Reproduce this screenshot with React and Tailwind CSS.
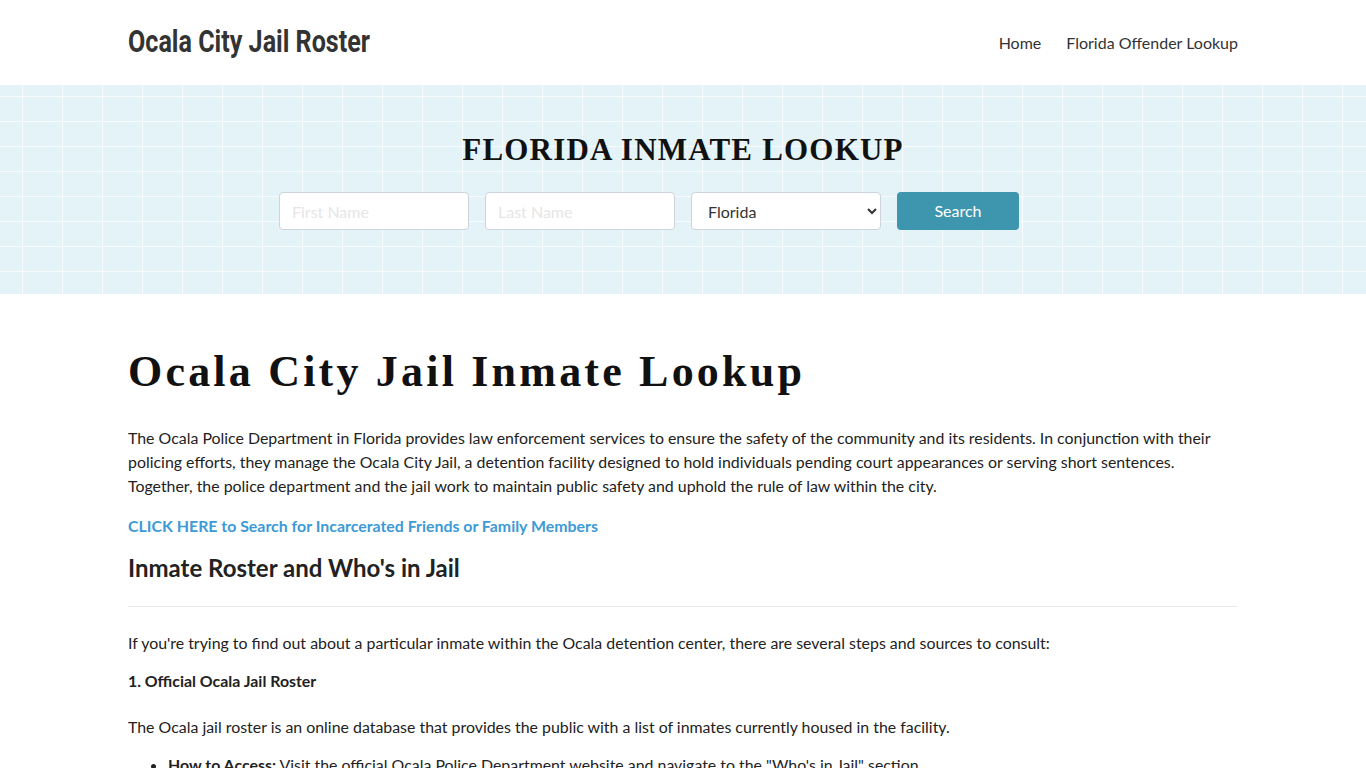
import { useState } from 'react'

const STATES = ['Alabama', 'Alaska', 'Arizona', 'Florida', 'Georgia', 'Texas']

export default function App() {
  const [state, setState] = useState('Florida')

  return (
    <div className="min-h-screen bg-white text-[#222] font-['Lato','Open_Sans',sans-serif]">
      {/* Header */}
      <header className="h-[85px] bg-white">
        <div className="mx-auto w-[1110px] h-full flex items-center justify-between">
          <a href="#" className="inline-block origin-left scale-x-[0.81] whitespace-nowrap text-[#333] text-[31px] font-bold font-['Roboto','Liberation_Sans',sans-serif]">
            Ocala City Jail Roster
          </a>
          <nav className="flex items-center gap-[25px] text-[16px] text-[#333]">
            <a href="#">Home</a>
            <a href="#">Florida Offender Lookup</a>
          </nav>
        </div>
      </header>

      {/* Search banner */}
      <section className="h-[209px] bg-[#e3f3f7] bg-[linear-gradient(90deg,rgba(255,255,255,0.7)_1.5px,transparent_1.5px),linear-gradient(0deg,rgba(255,255,255,0.7)_1.5px,transparent_1.5px)] bg-[length:40px_25px] bg-[position:22px_12px] flex flex-col items-center pt-[47px]">
        <h2 className="text-[31px] leading-[36px] font-bold tracking-[1.2px] text-[#111] font-['Liberation_Serif','DejaVu_Serif',serif]">
          FLORIDA INMATE LOOKUP
        </h2>
        <form className="mt-[24px] mr-[68px] flex gap-4" onSubmit={e => e.preventDefault()}>
          <input
            placeholder="First Name"
            className="w-[190px] h-[38px] px-3 rounded border border-[#ced4da] bg-white text-[16px] placeholder:text-[#e6e6e6] outline-none"
          />
          <input
            placeholder="Last Name"
            className="w-[190px] h-[38px] px-3 rounded border border-[#ced4da] bg-white text-[16px] placeholder:text-[#e6e6e6] outline-none"
          />
          <select
            value={state}
            onChange={e => setState(e.target.value)}
            className="w-[190px] h-[38px] pl-3 pr-2 rounded border border-[#ced4da] bg-white text-[16px] text-[#333] outline-none"
          >
            {STATES.map(s => <option key={s}>{s}</option>)}
          </select>
          <button className="w-[122px] h-[38px] rounded bg-[#3e96ae] text-white text-[16px]">
            Search
          </button>
        </form>
      </section>

      {/* Main content */}
      <main className="mx-auto w-[1110px] pt-[52px] pb-10 text-[15.9px] leading-[24px]">
        <h1 className="text-[44px] leading-[52px] font-bold tracking-[3.2px] text-[#111] font-['Liberation_Serif','DejaVu_Serif',serif]">
          Ocala City Jail Inmate Lookup
        </h1>
        <p className="mt-[28px]">
          The Ocala Police Department in Florida provides law enforcement services to ensure the safety of the community and its residents. In conjunction with their policing efforts, they manage the Ocala City Jail, a detention facility designed to hold individuals pending court appearances or serving short sentences. Together, the police department and the jail work to maintain public safety and uphold the rule of law within the city.
        </p>
        <p className="mt-4">
          <a href="#" className="font-bold text-[#3d9ad6]">CLICK HERE to Search for Incarcerated Friends or Family Members</a>
        </p>
        <h2 className="mt-[15px] text-[24px] leading-[30px] font-bold text-[#222]">
          Inmate Roster and Who's in Jail
        </h2>
        <hr className="mt-[23px] border-t border-[#e9ecef]" />
        <p className="mt-[24px]">
          If you're trying to find out about a particular inmate within the Ocala detention center, there are several steps and sources to consult:
        </p>
        <p className="mt-[14px] font-bold">1. Official Ocala Jail Roster</p>
        <p className="mt-[22px]">
          The Ocala jail roster is an online database that provides the public with a list of inmates currently housed in the facility.
        </p>
        <ul className="mt-[14px] pl-10 list-disc">
          <li><b>How to Access:</b> Visit the official Ocala Police Department website and navigate to the "Who's in Jail" section.</li>
          <li><b>Information Available:</b> Inmate name, booking date, charges, bond amount and expected release date.</li>
        </ul>
      </main>
    </div>
  )
}
